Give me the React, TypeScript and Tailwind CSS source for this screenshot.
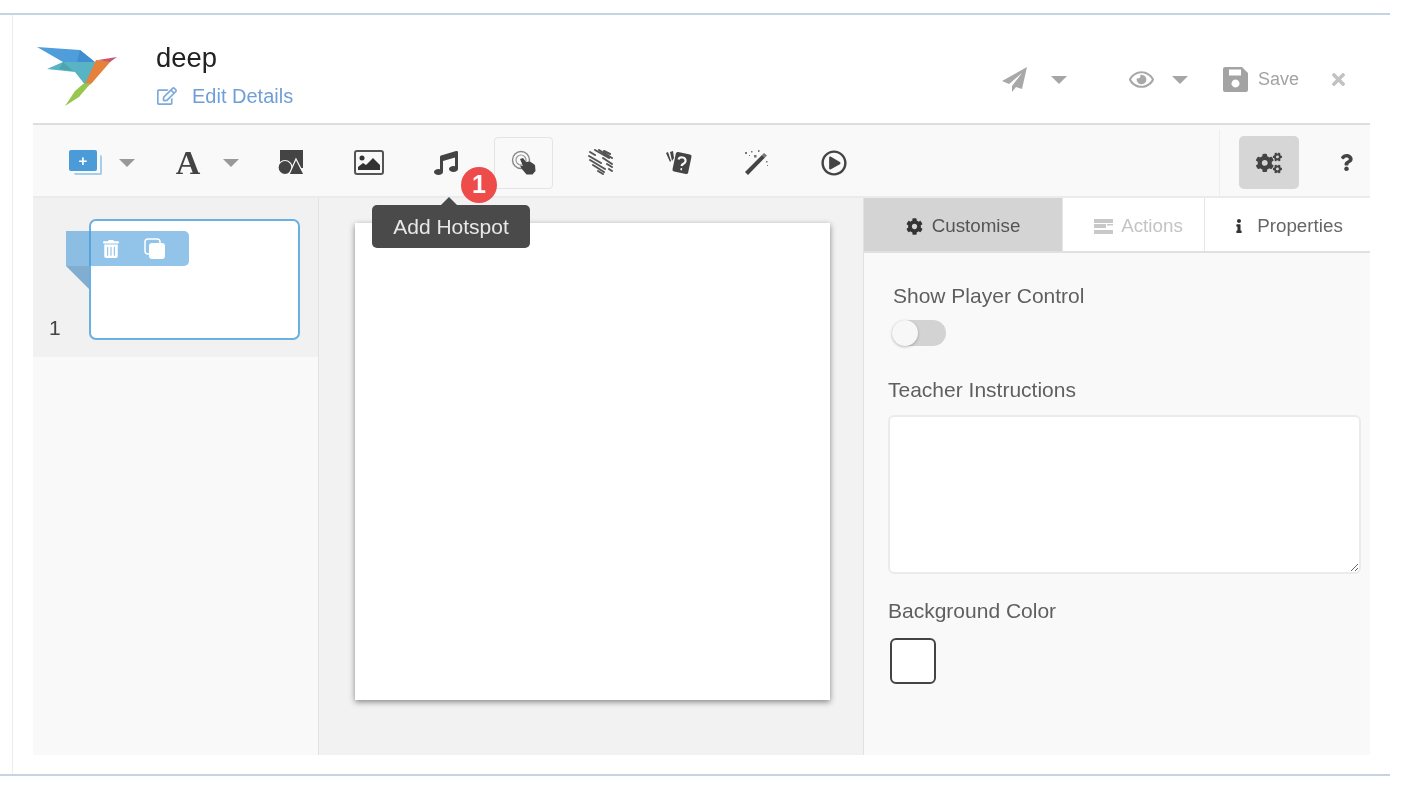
import { FaCogs, FaInfo, FaMusic, FaQuestion, FaRegEdit, FaRegEye, FaRegPlayCircle, FaTimes, FaTrashAlt, FaCog } from 'react-icons/fa';

const Logo = () => (
  <svg width="82" height="62" viewBox="0 0 82 62" className="shrink-0">
    <polygon points="0,1 43,4 59,17 26,16" fill="#4f9edb" />
    <polygon points="43,4 59,17 40,16" fill="#3f8ecf" />
    <polygon points="10,23 26,16 60,16 49,40 38,26" fill="#58b4c4" />
    <polygon points="26,16 36,25 22,23" fill="#4fa3ad" />
    <polygon points="59,14 74,15 54,38 46,43 48,38" fill="#e5813a" />
    <polygon points="46,38 54,37 42,51 28,60 38,45" fill="#97c74f" />
    <polygon points="61,14 80,11 73,16" fill="#c9586f" />
  </svg>
);

const PageAddIcon = () => (
  <span className="relative block w-[33px] h-[25px]">
    <span className="absolute left-[5px] top-[5px] w-[28px] h-[20px] rounded-[2px] border-r-2 border-b-2 border-[#a5cdec]" />
    <span className="absolute left-0 top-0 w-[28px] h-[21px] rounded-[2px] bg-[#4a9bd8] flex items-center justify-center text-white text-[15px] font-bold leading-none">+</span>
  </span>
);

const Caret = ({ color }: { color: string }) => (
  <svg width="16" height="8" viewBox="0 0 16 8" className="block"><path d="M0 0h16L8 8z" fill={color} /></svg>
);

const PlaneIcon = () => (
  <svg width="25" height="25" viewBox="0 0 25 25" fill="#a8a8a8">
    <path d="M25 0L0 14l7 3L20 6 10 19v6l4-5 6 2z" />
  </svg>
);

const SaveIcon = () => (
  <svg width="25" height="25" viewBox="0 0 25 25" fill="#a3a3a3">
    <path fillRule="evenodd" d="M2 0h17l6 6v17a2 2 0 0 1-2 2H2a2 2 0 0 1-2-2V2a2 2 0 0 1 2-2zM6 2.500v6h12v-6zM12.500 12.500a4 4 0 1 0 .01 0z" />
  </svg>
);

const ShapesIcon = () => (
  <svg width="26" height="25" viewBox="0 0 26 25" fill="#444">
    <rect x="2" y="0" width="23" height="18" />
    <circle cx="7" cy="17.500" r="7" stroke="#f9f9f9" strokeWidth="1.200" />
    <polygon points="18,9 26,24.500 11,24.500" stroke="#f9f9f9" strokeWidth="1.200" />
  </svg>
);

const ImageIcon = () => (
  <svg width="30" height="25" viewBox="0 0 30 25">
    <rect x="1" y="1" width="28" height="23" rx="2" fill="#f9f9f9" stroke="#555" strokeWidth="2" />
    <circle cx="8" cy="8" r="2.500" fill="#333" />
    <path d="M4 20v-3l5-4 3 2 7-7 7 7v5z" fill="#333" />
  </svg>
);

const HotspotIcon = () => (
  <svg width="26" height="26" viewBox="0 0 26 26" fill="#444">
    <circle cx="10" cy="10" r="8.500" fill="none" stroke="#888" strokeWidth="1.400" />
    <circle cx="10" cy="10" r="5" fill="none" stroke="#999" strokeWidth="1.200" />
    <path d="M9 9l3-1 3 4 4-.5 5 3.500.5 6-3 3.500-6 0-5-6-1.500-3 3 .5z" />
  </svg>
);

const HatchIcon = () => (
  <svg width="26" height="27" viewBox="0 0 26 27" stroke="#555" strokeWidth="2" strokeLinecap="round">
    <path d="M2 3l5 3M1 7l12 7M2 11l15 9M5 16l11 7M10 22l5 3M7 1l14 8M11 1l13 8M16 2l6 3M15 9l9 6M19 15l5 3M21 20l3 2" />
  </svg>
);

const CardsIcon = () => (
  <svg width="28" height="26" viewBox="0 0 28 26">
    <path d="M1 3l2-1 3 9-1 1zM5 2l3-1 1 7-2 3z" fill="#444" />
    <rect x="9" y="3" width="16" height="20" rx="2" transform="rotate(12 17 13)" fill="#444" />
    <path d="M13.500 9.500c1-3.500 8-2.500 7 2-.5 2.500-3.500 2-4 4.500M15.500 19l1.500 .3" fill="none" stroke="#f9f9f9" strokeWidth="2.200" />
  </svg>
);

const WandIcon = () => (
  <svg width="26" height="26" viewBox="0 0 26 26" fill="#444">
    <path d="M2 22L19 5l3 2.500L5 25z" />
    <path d="M19 5l2-2 3 2.500-2 2z" fill="#777" />
    <path d="M2 2h2v2H2zM8 1h1.500v1.500H8zM11 5h2.500v2.500H11zM15 0h1.500v2H15zM23 11h1.500v1.500H23zM24 15h1v1h-1zM6 5h1v1H6z" fill="#777" />
  </svg>
);

const ActionsIcon = () => (
  <svg width="19" height="15" viewBox="0 0 19 15" fill="#c8c8c8">
    <rect x="0" y="0" width="19" height="4" />
    <rect x="0" y="5" width="12" height="4" />
    <rect x="13" y="5" width="6" height="1.500" />
    <rect x="0" y="11" width="19" height="4" />
  </svg>
);

const CopyIcon = () => (
  <svg width="22" height="22" viewBox="0 0 22 22">
    <rect x="1" y="1" width="15" height="15" rx="3" fill="none" stroke="#fff" strokeWidth="1.500" />
    <rect x="5" y="5" width="16" height="16" rx="3" fill="#fff" />
  </svg>
);

function ToolItem({ children, boxed }: { children: React.ReactNode; boxed?: boolean }) {
  return (
    <div className="w-[77.5px] flex justify-center shrink-0">
      <div className={`w-[59px] h-[52px] flex items-center justify-center rounded-[4px] text-[#444] ${boxed ? 'border border-[#e4e4e4]' : ''}`}>
        {children}
      </div>
    </div>
  );
}

function Tab({ className, children }: { className: string; children: React.ReactNode }) {
  return (
    <div className={`${className} flex items-center justify-center pt-[3px] text-[18.800px]`}>
      {children}
    </div>
  );
}

export default function App() {
  return (
    <div className="w-[1428px] h-[796px] bg-white overflow-hidden font-['Liberation_Sans',sans-serif] pt-[13px] blur-[0.5px]">
      <div className="w-[1390px] h-[763px] border-y-2 border-[#c6d3e2] flex">
        <div className="w-[13px] border-r border-[#ececec]" />
        <div className="w-[1337px] ml-[20px] flex flex-col h-[740px]">
          <header className="h-[110px] flex items-start shrink-0 border-b-2 border-[#dedede]">
            <div className="ml-[4px] mt-[31px]"><Logo /></div>
            <div className="ml-[37px] mt-[25px]">
              <div className="text-[27.400px] leading-[36px] text-[#222]">deep</div>
              <div className="flex items-center text-[#6f9fd6] text-[20px] leading-[28px] mt-[6px]">
                <FaRegEdit className="text-[20px] text-[#7ea9da] ml-[1px]" />
                <span className="ml-[15px]">Edit Details</span>
              </div>
            </div>
            <div className="ml-auto mt-[51px] flex items-center text-[#a8a8a8]">
              <PlaneIcon />
              <span className="ml-[24px]"><Caret color="#a6a6a6" /></span>
              <FaRegEye className="text-[25px] ml-[62px]" />
              <span className="ml-[18px]"><Caret color="#a6a6a6" /></span>
              <span className="ml-[35px]"><SaveIcon /></span>
              <span className="ml-[10px] text-[18px] text-[#a3a3a3]">Save</span>
              <FaTimes className="text-[19px] ml-[30px] mr-[22px] text-[#c2c2c2]" />
            </div>
          </header>
          <div className="h-[73px] shrink-0 bg-[#f9f9f9] flex items-center pt-[4px] border-b-2 border-[#ebebeb]">
            <div className="ml-[36px] w-[33px]"><PageAddIcon /></div>
            <div className="ml-[17px]"><Caret color="#999999" /></div>
            <span className="ml-[40px] w-[26px] text-center font-['Liberation_Serif',serif] font-bold text-[34px] leading-[34px] text-[#444]">A</span>
            <div className="ml-[22px]"><Caret color="#999999" /></div>
            <div className="ml-[13.500px] flex items-center">
              <ToolItem><ShapesIcon /></ToolItem>
              <ToolItem><ImageIcon /></ToolItem>
              <ToolItem><FaMusic className="text-[24px]" /></ToolItem>
              <ToolItem boxed><HotspotIcon /></ToolItem>
              <ToolItem><HatchIcon /></ToolItem>
              <ToolItem><CardsIcon /></ToolItem>
              <ToolItem><WandIcon /></ToolItem>
              <ToolItem><FaRegPlayCircle className="text-[26px]" /></ToolItem>
            </div>
            <div className="ml-auto h-[66px] w-[151px] border-l border-[#eeeeee] flex items-center">
              <div className="ml-[19px] w-[60px] h-[53px] bg-[#d6d6d6] rounded-[5px] flex items-center justify-center">
                <FaCogs className="text-[26px] text-[#444]" />
              </div>
              <FaQuestion className="ml-[39px] text-[17px] text-[#444]" />
            </div>
          </div>
          <main className="flex-1 flex min-h-0 relative">
            <aside className="w-[286px] shrink-0 bg-[#f9f9f9] border-r border-[#e2e2e2]">
              <div className="h-[159px] bg-[#f1f1f1] relative pt-[21px] pl-[56px]">
                <div className="w-[211px] h-[121px] bg-white border-2 border-[#6bb0e2] rounded-[7px]" />
                <span className="absolute left-[16px] top-[116px] text-[21px] leading-[28px] text-[#444]">1</span>
                <div className="absolute left-[33px] top-[33px] w-[123px] h-[35px] bg-[#4a9bd8]/60 rounded-r-[5px] flex items-center pl-[36px] gap-[24px] text-white">
                  <FaTrashAlt className="text-[18px]" />
                  <CopyIcon />
                </div>
                <div className="absolute left-[33px] top-[68px] w-0 h-0 border-t-[23px] border-l-[23px] border-t-[#81aed0] border-l-transparent" />
              </div>
            </aside>
            <section className="w-[544px] shrink-0 bg-[#f2f2f2] pl-[36px] pt-[25px]">
              <div className="w-[475px] h-[477px] bg-white shadow-[0_2px_6px_rgba(0,0,0,0.45)]" />
            </section>
            <section className="flex-1 bg-[#f9f9f9] border-l border-[#e2e2e2]">
              <div className="h-[55px] flex border-b-2 border-[#e0e0e0]">
                <Tab className="w-[198px] bg-[#d4d4d4] text-[#555]">
                  <FaCog className="text-[17px] text-[#333] mr-[9px]" /> Customise
                </Tab>
                <Tab className="w-[142px] bg-white border-l border-[#e6e6e6] text-[#c4c4c4] pl-[10px]">
                  <span className="mr-[8px]"><ActionsIcon /></span> Actions
                </Tab>
                <Tab className="w-[166px] bg-white border-l border-[#e6e6e6] text-[#666]">
                  <FaInfo className="text-[14px] text-[#333] mr-[11px]" /> Properties
                </Tab>
              </div>
              <div className="pl-[24px] pr-[8px] text-[21px] text-[#5f5f5f]">
                <div className="pl-[5px] pt-[29px] leading-[28px]">Show Player Control</div>
                <div className="relative ml-[4px] mt-[10px] w-[54px] h-[26px] rounded-full bg-[#d3d3d3]">
                  <span className="absolute left-0 top-0 w-[26px] h-[26px] rounded-full bg-[#f7f7f7] shadow-[0_1px_3px_rgba(0,0,0,0.25)]" />
                </div>
                <div className="mt-[30px] leading-[28px]">Teacher Instructions</div>
                <textarea className="block mt-[11px] w-[473px] h-[159px] bg-white border-2 border-[#ebebeb] rounded-[6px]" />
                <div className="mt-[23px] leading-[28px]">Background Color</div>
                <div className="mt-[13px] ml-[2px] w-[46px] h-[46px] bg-white border-2 border-[#444] rounded-[6px]" />
              </div>
            </section>
            <div className="absolute left-[339px] top-[7px] w-[158px] h-[43px] rounded-[5px] bg-[#4a4a4a] text-[#e8e8e8] text-[21px] flex items-center justify-center">
              <span className="absolute left-[69px] -top-[8px] w-0 h-0 border-x-[8px] border-b-[8px] border-x-transparent border-b-[#4a4a4a]" />
              Add Hotspot
            </div>
            <div className="absolute left-[428px] -top-[31px] w-[36px] h-[36px] rounded-full bg-[#ee4c4a] text-white text-[25px] font-bold flex items-center justify-center">1</div>
          </main>
        </div>
      </div>
    </div>
  );
}
